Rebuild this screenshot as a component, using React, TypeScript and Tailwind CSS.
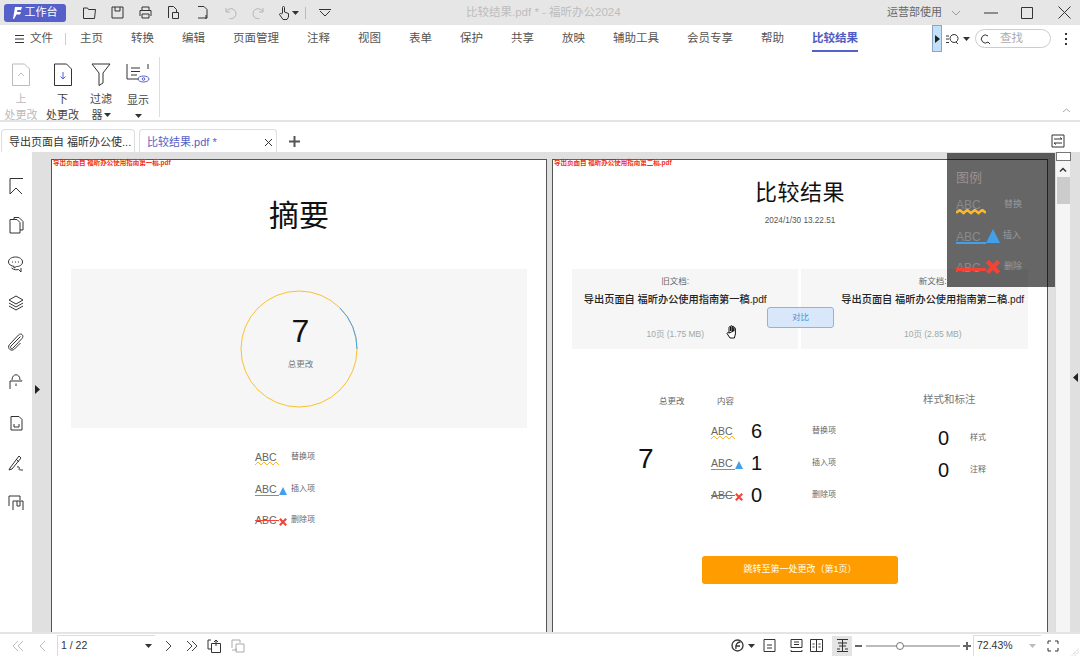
import React from 'react';

const Ic = ({ s = 18, w, h, c = '#333', sw = 1, children }: { s?: number; w?: number; h?: number; c?: string; sw?: number; children: React.ReactNode }) => (
  <svg width={w ?? s} height={h ?? s} viewBox={`0 0 ${w ?? s} ${h ?? s}`} fill="none" stroke={c} strokeWidth={sw} className="shrink-0">
    {children}
  </svg>
);

const Caret = ({ c = '#333' }: { c?: string }) => (
  <svg width="7" height="4" viewBox="0 0 7 4" className="shrink-0"><path d="M0 0h7L3.5 4z" fill={c} /></svg>
);

const menus = ['主页', '转换', '编辑', '页面管理', '注释', '视图', '表单', '保护', '共享', '放映', '辅助工具', '会员专享', '帮助'];

const TitleBar = () => (
  <div className="h-[25px] bg-[#e6e6e6] flex items-center relative">
    <div className="ml-[4px] w-[62px] h-[18px] rounded-[3px] bg-[#5560c8] flex items-center justify-center gap-[3px] text-white text-[11px]">
      <svg width="9" height="12" viewBox="0 0 9 12"><path d="M2 0h7L8 3H4.5L4 5h4L7 7.500H3.500L1 12H0z" fill="#fff" /></svg>
      工作台
    </div>
    <div className="ml-[9px] flex items-center">
      <div className="w-[28px] flex justify-center"><Ic s={15}><path d="M1.500 13.500V3h4l1 1.500h7l-1 9z" /></Ic></div>
      <div className="w-[28px] flex justify-center"><Ic s={15}><path d="M2 2h11v11H2zM5 2v4h5V2" /></Ic></div>
      <div className="w-[28px] flex justify-center"><Ic s={15}><path d="M4 5V2h7v3M2 11V5.500h11V11M4 9h7v4H4z" /></Ic></div>
      <div className="w-[29px] flex justify-center"><Ic s={15}><path d="M2.500 13V1.500h5l3 3V7M6.500 7.500h6v6h-6z" /></Ic></div>
      <div className="w-[28px] flex justify-center"><Ic s={15}><path d="M3 1.500h6l3 3V13H3M11 10v4" /></Ic></div>
      <div className="w-[28px] flex justify-center"><Ic s={15} c="#b5b5b5"><path d="M3 3v4h4M3.500 6.500a5 5 0 1 1 3 7" /></Ic></div>
      <div className="w-[29px] flex justify-center"><Ic s={15} c="#b5b5b5"><path d="M12 3v4H8M11.500 6.500a5 5 0 1 0-3 7" /></Ic></div>
      <div className="ml-[4px] w-[15px] flex justify-center"><Ic s={15}><path d="M5.500 8V2.500a1 1 0 0 1 2 0V7l4 1.500V12l-1.500 2.500H6L2.500 9.500c0-1 1-1.500 2-.5z" /></Ic></div>
      <Caret />
      <div className="ml-[6px] w-px h-[12px] bg-[#bbb]" />
      <div className="ml-[12px]"><Ic s={14}><path d="M1 3.500h12M2 5l5 5 5-5" /></Ic></div>
    </div>
    <div className="absolute left-[466px] top-[4px] text-[11.500px] text-[#bdbdbd] whitespace-nowrap">比较结果.pdf * - 福昕办公2024</div>
    <div className="ml-auto flex items-center">
      <span className="text-[11px] text-[#666]">运营部使用</span>
      <div className="ml-[9px]"><Ic s={10} c="#999"><path d="M1 3l4 4 4-4" /></Ic></div>
      <div className="ml-[23px]"><Ic s={14}><path d="M0 7h14" /></Ic></div>
      <div className="ml-[23px]"><Ic s={12}><path d="M.5.500h11v11H.5z" /></Ic></div>
      <div className="ml-[25px] mr-[9px]"><Ic s={13}><path d="M.5.500l12 12M12.500.500l-12 12" /></Ic></div>
    </div>
  </div>
);

const MenuBar = () => (
  <div className="h-[27px] flex items-center text-[11.500px] text-[#555] relative">
    <div className="ml-[15px]"><Ic s={10}><path d="M0 1.500h9M0 5h9M0 8.500h9" /></Ic></div>
    <span className="ml-[5px]">文件</span>
    <div className="ml-[12px] w-px h-[12px] bg-[#ccc]" />
    <div className="ml-[14px] flex gap-[28px]">
      {menus.map((m) => <span key={m} className="whitespace-nowrap">{m}</span>)}
    </div>
    <div className="ml-[28px] h-full relative flex items-center">
      <span className="text-[#4f5cc4] font-bold">比较结果</span>
      <div className="absolute left-0 right-0 bottom-0 h-[2px] bg-[#5560c8]" />
    </div>
    <div className="ml-[74px] w-[10px] h-[27px] bg-[#c4e0f8] border border-[#8aa6c4] flex items-center justify-center">
      <svg width="5" height="8" viewBox="0 0 5 8"><path d="M0 0l5 4-5 4z" fill="#222" /></svg>
    </div>
    <div className="ml-[3px]"><Ic s={14}><path d="M1 4h3M1 7h3M1 10.500h3M9 2.500a4 4 0 1 0 .1 0zM11 10l2 2" /></Ic></div>
    <div className="ml-[4px]"><Caret /></div>
    <div className="ml-[5px] w-[76px] h-[19px] rounded-full border border-[#ccc] flex items-center">
      <div className="ml-[3px]"><Ic s={12}><path d="M9 3a4 4 0 1 0 0 6M9 9l2 2" /></Ic></div>
      <span className="ml-[9px] text-[#aaa]">查找</span>
    </div>
    <div className="ml-[14px] flex flex-col gap-[3px]">
      <i className="block w-[2px] h-[2px] bg-[#333]" /><i className="block w-[2px] h-[2px] bg-[#333]" /><i className="block w-[2px] h-[2px] bg-[#333]" />
    </div>
  </div>
);

const Tool = ({ icon, label, w, dim, caret }: { icon: React.ReactNode; label: React.ReactNode; w: number; dim?: boolean; caret?: boolean }) => (
  <div className={`flex flex-col items-center text-[11px] leading-[16px] pt-[11px] ${dim ? 'text-[#bbb]' : 'text-[#444]'}`} style={{ width: w }}>
    <div className="h-[24px]">{icon}</div>
    <div className="mt-[5px] text-center whitespace-nowrap">{label}</div>
    {caret && <div className="mt-[6px]"><Caret /></div>}
  </div>
);

const Ribbon = () => (
  <div className="h-[70px] flex border-b-2 border-[#e4e4e4] relative">
    <Tool w={42} dim label={<>上<br />处更改</>} icon={<Ic w={18} h={23} c="#bbb"><path d="M.5 1h12l5 5v16.500H.5zM6 13l3-3 3 3" /></Ic>} />
    <Tool w={41} label={<>下<br />处更改</>} icon={<Ic w={18} h={23}><path d="M.5 1h12l5 5v16.500H.5z" /><path d="M9 9v7M6.500 13.500L9 16l2.500-2.500" stroke="#5560c8" /></Ic>} />
    <Tool w={36} label={<>过滤<br /><span className="inline-flex items-center gap-[1px]">器<Caret /></span></>} icon={<Ic w={20} h={23}><path d="M1 1h18l-7 9v10l-4 2.500V10z" /></Ic>} />
    <Tool w={38} caret label="显示" icon={<Ic w={24} h={23}><path d="M1 1v15h12M5 5h9M5 8.500h9M5 12h6M22 1v5" /><ellipse cx="17.500" cy="16" rx="5.500" ry="3" stroke="#5560c8" /><circle cx="17.500" cy="16" r="1.300" stroke="#5560c8" /></Ic>} />
    <div className="ml-[2px] mt-[5px] w-px h-[60px] bg-[#ddd]" />
    <div className="absolute right-[9px] bottom-[5px]"><Ic s={9} c="#aaa"><path d="M1 6l3.500-3L8 6" /></Ic></div>
  </div>
);

const TabBar = () => (
  <div className="h-[30px] flex items-end text-[11px] relative">
    <div className="ml-[1px] w-[134px] h-[23px] border border-b-0 border-[#ddd] rounded-t-[4px] flex items-center pl-[7px] pt-[2px] text-[#333] whitespace-nowrap">导出页面自 福昕办公使...</div>
    <div className="ml-[4px] w-[138px] h-[23px] border border-b-0 border-[#ddd] rounded-t-[4px] flex items-center pl-[7px] pt-[2px] text-[#5560c8]">
      比较结果.pdf *
      <div className="ml-auto mr-[3px]"><Ic s={9}><path d="M1 1l7 7M8 1L1 8" /></Ic></div>
    </div>
    <div className="ml-[12px] mb-[5px]"><Ic s={11} c="#555" sw={2}><path d="M5.500 0v11M0 5.500h11" /></Ic></div>
    <div className="ml-auto mr-[15px] mb-[4px]"><Ic s={14}><path d="M1 1h12v12H1zM3 5h8L9 3.500M11 9H3l2 1.500" /></Ic></div>
  </div>
);

const sideIcons = [
  <path key="a" d="M3 17V1.500h13M3 17l6-6 6 6" />,
  <path key="b" d="M7 3.500V1.500h5l4 4V14h-3M3 3.500h7l3 3V17H3z" />,
  <path key="c" d="M1.500 7c0-3 3-5 7-5s7 2 7 5-3 4.500-6 4.500L7 13v-1.700C4 11 1.500 9.500 1.500 7zM5 7h1M8 7h1M11 7h1M4.500 13c2.500 2 5 2 7 1.500l2.500 2.500v-4" />,
  <path key="d" d="M9 2l7 4-7 4-7-4zM2 9l7 4 7-4M2 12l7 4 7-4" />,
  <path key="e" d="M13.500 3.500L4 13c-1.500 2 .5 3.500 2 2l9-9.500c2.500-3-1-6-3.500-3.500l-9 9.500c-3 4 2 7.500 5 4.500l6-6" />,
  <path key="f" d="M3 17V9h12M5 8c0-7 8-7 8 0M15 8.500v.5M9 11.500v2.500" />,
  <path key="g" d="M4 2.500h8l3 3V16H4zM7 10v3h5v-3" />,
  <path key="h" d="M3 14L12 2l2 2L5 15l-3 1zM9 5l3 3M10 13c2-1 3 1 2 2s3 1 4 1" />,
  <path key="i" d="M2 12V2h11v4M6 16V7h10v9M10 7v5h3V7" />,
];

const Sidebar = () => (
  <div className="w-[32px] h-full bg-white flex flex-col items-center pt-[25px] gap-[21px] shrink-0">
    {sideIcons.map((p, i) => (
      <div key={i} className={i === 6 ? 'mt-[3px]' : i > 6 ? 'mt-[1px]' : ''}>
        <Ic s={18}>{p}</Ic>
      </div>
    ))}
  </div>
);

const Mark = ({ kind, w = 24, big }: { kind: 'wave' | 'ins' | 'del'; w?: number; big?: boolean }) => {
  const col = kind === 'wave' ? '#fbb82c' : kind === 'ins' ? '#42a0ea' : '#f44336';
  const iconS = big ? 14 : 8;
  return (
    <div className="flex items-end">
      <div className="relative leading-[12px]" style={{ width: w, fontSize: big ? 12 : 10.5 }}>
        <span className={big ? 'text-[#8a8a8a]' : 'text-[#666]'}>ABC</span>
        {kind === 'wave' && (
          <svg className="absolute left-0 bottom-[-4px]" width={w} height="6" viewBox="0 0 24 6" preserveAspectRatio="none">
            <path d="M0 4l3-3 3 3 3-3 3 3 3-3 3 3 3-3 3 3" stroke={col} strokeWidth={big ? 2.400 : 1} fill="none" />
          </svg>
        )}
        {kind === 'ins' && <div className="absolute left-0 right-0 bottom-[-1px]" style={{ height: big ? 2 : 1, background: col }} />}
        {kind === 'del' && <div className="absolute left-0 right-0 top-[6px]" style={{ height: big ? 3 : 1, background: col }} />}
      </div>
      {kind === 'ins' && <svg width={iconS} height={iconS} viewBox="0 0 10 10"><path d="M5 0l5 10H0z" fill={col} /></svg>}
      {kind === 'del' && <svg width={iconS} height={iconS} viewBox="0 0 10 10"><path d="M1 1l8 8M9 1L1 9" stroke={col} strokeWidth={big ? 3 : 2.600} /></svg>}
    </div>
  );
};

const PageHead = ({ t }: { t: string }) => (
  <div className="h-[6px] pl-px text-[6.500px] leading-[6px] font-bold text-[#f03010] whitespace-nowrap">{t}</div>
);

const LeftPage = () => (
  <div className="w-[496px] h-[480px] shrink-0 bg-white border border-[#555] border-b-0 flex flex-col">
    <PageHead t="导出页面自 福昕办公使用指南第一稿.pdf" />
    <div className="mt-[31px] h-[38px] text-center text-[30px] leading-[38px] text-[#111]">摘要</div>
    <div className="mt-[34px] mx-[19px] h-[159px] bg-[#f6f6f6] flex items-center justify-center relative">
      <svg width="118" height="118" viewBox="0 0 118 118">
        <circle cx="59" cy="59" r="58" fill="none" stroke="#fcc02e" strokeWidth="1" />
        <path d="M100 18A58 58 0 0 1 117 59" fill="none" stroke="#42a5f5" strokeWidth="1" />
      </svg>
      <div className="absolute inset-0 flex flex-col items-center pt-[44px] pl-[3px]">
        <div className="text-[32px] leading-[36px] text-[#111] font-['Liberation_Sans',sans-serif]">7</div>
        <div className="mt-[9px] text-[8.500px] leading-[12px] text-[#777]">总更改</div>
      </div>
    </div>
    <div className="mt-[23px] ml-[203px] flex flex-col gap-[19.500px] text-[8px] leading-[12px] text-[#666]">
      <div className="flex items-center gap-[12px] h-[12px]"><div className="w-[24px]"><Mark kind="wave" /></div>替换项</div>
      <div className="flex items-center gap-[4px] h-[12px]"><div className="w-[32px]"><Mark kind="ins" /></div>插入项</div>
      <div className="flex items-center gap-[4px] h-[12px]"><div className="w-[32px]"><Mark kind="del" /></div>删除项</div>
    </div>
  </div>
);

const DocCard = ({ label, name, size, pad }: { label: string; name: string; size: string; pad: string }) => (
  <div className={`w-[227px] h-[80px] bg-[#f6f6f6] flex flex-col items-center pt-[6px] ${pad}`}>
    <div className="text-[8.500px] leading-[12px] text-[#666]">{label}</div>
    <div className="mt-[6px] text-[10.200px] leading-[14px] text-[#222] whitespace-nowrap font-medium">{name}</div>
    <div className="mt-[21px] text-[8.500px] leading-[12px] text-[#9aa]">{size}</div>
  </div>
);

const StatRow = ({ kind, n, label }: { kind: 'wave' | 'ins' | 'del'; n: string; label: string }) => (
  <div className="h-[32px] flex items-center">
    <div className="w-[40px]"><Mark kind={kind} /></div>
    <div className="w-[61px] text-[20px] text-[#111] font-['Liberation_Sans',sans-serif]">{n}</div>
    <div className="text-[8px] text-[#666]">{label}</div>
  </div>
);

const RightPage = () => (
  <div className="w-[496px] h-[480px] shrink-0 bg-white border border-[#555] border-b-0 flex flex-col relative">
    <PageHead t="导出页面自 福昕办公使用指南第二稿.pdf" />
    <div className="mt-[12px] h-[30px] text-center text-[22px] leading-[30px] tracking-[0.500px] text-[#111]">比较结果</div>
    <div className="mt-[7px] text-center text-[8.200px] leading-[12px] text-[#555]">2024/1/30 13.22.51</div>
    <div className="mt-[42px] mx-[19px] flex gap-[3px]">
      <DocCard pad="pr-[20px]" label="旧文档:" name="导出页面自 福昕办公使用指南第一稿.pdf" size="10页 (1.75 MB)" />
      <DocCard pad="pl-[36px]" label="新文档:" name="导出页面自 福昕办公使用指南第二稿.pdf" size="10页 (2.85 MB)" />
    </div>
    <div className="absolute left-[214px] top-[147px] w-[67px] h-[21px] rounded-[3px] bg-[#d8e8fa] border border-[#7fb8ee] flex items-center justify-center text-[8.500px] text-[#4a90d9]">对比</div>
    <div className="absolute left-[171px] top-[164px]">
      <Ic s={16} c="#111"><path d="M5 9V3.500a.8.8 0 0 1 1.600 0V7M6.600 7V2.500a.8.8 0 0 1 1.600 0V7M8.200 7V3a.8.8 0 0 1 1.600 0v4M9.800 7V4.500a.8.8 0 0 1 1.600 0V10l-1 4H6L3 9.500c0-1 1-1 2-.5z" fill="#fff" /></Ic>
    </div>
    <div className="mt-[46px] flex">
      <div className="w-[158px] shrink-0">
        <div className="pl-[106px] text-[8.500px] leading-[12px] text-[#666]">总更改</div>
        <div className="mt-[35px] pl-[85px] text-[28px] leading-[34px] text-[#111] font-['Liberation_Sans',sans-serif]">7</div>
      </div>
      <div className="w-[212px] shrink-0">
        <div className="pl-[6px] text-[8.500px] leading-[12px] text-[#666]">内容</div>
        <div className="mt-[8px] flex flex-col pl-0">
          <StatRow kind="wave" n="6" label="替换项" />
          <StatRow kind="ins" n="1" label="插入项" />
          <StatRow kind="del" n="0" label="删除项" />
        </div>
      </div>
      <div className="-mt-[3px] w-[126px]">
        <div className="text-[10.500px] leading-[14px] text-[#777]">样式和标注</div>
        <div className="mt-[20px] pl-[15px] flex flex-col gap-[8px]">
          <div className="h-[24px] flex items-center"><span className="w-[32px] text-[20px] text-[#111] font-['Liberation_Sans',sans-serif]">0</span><span className="text-[8px] text-[#666]">样式</span></div>
          <div className="h-[24px] flex items-center"><span className="w-[32px] text-[20px] text-[#111] font-['Liberation_Sans',sans-serif]">0</span><span className="text-[8px] text-[#666]">注释</span></div>
        </div>
      </div>
    </div>
    <div className="mt-[45px] ml-[149px] w-[196px] h-[28px] rounded-[3px] bg-[#ff9c00] flex items-center justify-center text-[9px] text-white">跳转至第一处更改（第1页）</div>
  </div>
);

const Legend = () => (
  <div className="absolute left-[947px] top-[1px] w-[108px] h-[134px] bg-black/60 pl-[9px] pt-[17px]">
    <div className="text-[13px] leading-[16px] text-[#9a8f8f]">图例</div>
    <div className="mt-[11px] flex flex-col gap-[16px] text-[9px] text-[#999]">
      <div className="h-[15px] flex items-center"><div className="w-[48px]"><Mark kind="wave" w={30} big /></div>替换</div>
      <div className="h-[15px] flex items-center"><div className="w-[47px]"><Mark kind="ins" w={30} big /></div>插入</div>
      <div className="h-[15px] flex items-center"><div className="w-[48px]"><Mark kind="del" w={30} big /></div>删除</div>
    </div>
  </div>
);

const StatusBar = () => (
  <div className="h-[25px] border-t-2 border-[#e4e4e4] flex items-center relative">
    <div className="ml-[12px]"><Ic s={12} c="#bbb"><path d="M6 1L1 6l5 5M11 1L6 6l5 5" /></Ic></div>
    <div className="ml-[13px]"><Ic s={12} c="#bbb"><path d="M8 1L3 6l5 5" /></Ic></div>
    <div className="ml-[8px] w-[98px] h-[21px] border-l border-t border-[#ddd] flex items-center pl-[3px] text-[10.500px] text-[#333]">1 / 22<div className="ml-auto mr-[3px]"><Caret /></div></div>
    <div className="ml-[8px]"><Ic s={12} c="#444"><path d="M3 1l5 5-5 5" /></Ic></div>
    <div className="ml-[11px]"><Ic s={12} c="#444"><path d="M1 1l5 5-5 5M6 1l5 5-5 5" /></Ic></div>
    <div className="ml-[9px]"><Ic s={14}><path d="M4 1H1v9h3M4.500 4.500h9v9h-9zM9 7V1M7 3l2-2 2 2" /></Ic></div>
    <div className="ml-[10px]"><Ic s={14} c="#aaa"><path d="M1 9V1h8v3M5 5h8v8H5zM1 11h5l-1.500-1.500" /></Ic></div>
    <div className="ml-auto flex items-center">
      <Ic s={13} sw={1.300}><circle cx="6.500" cy="6.500" r="5.500" /><path d="M9.500 3C6 3 4 6 5 10M5 7h4" /></Ic>
      <div className="ml-[4px]"><Caret /></div>
      <div className="ml-[8px]"><Ic s={13}><path d="M1 .5h11v12H1zM4 6h5M4 9h5" /></Ic></div>
      <div className="ml-[14px]"><Ic s={13}><path d="M1 .5h11v8H1zM4 3h5M4 5.500h5M1 11v1.500h11V11" /></Ic></div>
      <div className="ml-[7px]"><Ic s={13}><path d="M.5.500h12v12H.5zM6.500.500v12M2.500 5h2M2.500 8h2M8.500 5h2M8.500 8h2" /></Ic></div>
      <div className="ml-[9px] w-[20px] h-[20px] bg-[#e4e4e4] flex items-center justify-center"><Ic s={13}><path d="M1 .5h11M6.500.500v12M2 4h9M3 7h7M1 10h3M9 10h3M1 12.500h11" /></Ic></div>
      <div className="ml-[3px] w-[7px] h-[2px] bg-[#666]" />
      <div className="ml-[4px] w-[94px] h-[2px] bg-[#bbb] relative">
        <div className="absolute left-[30px] -top-[3px] w-[8px] h-[8px] rounded-full bg-white border border-[#777]" />
      </div>
      <div className="ml-[3px]"><Ic s={8} c="#666" sw={2}><path d="M4 0v8M0 4h8" /></Ic></div>
      <div className="ml-[2px] w-[68px] h-[21px] border-l border-t border-[#ddd] flex items-center pl-[3px] text-[10.500px] text-[#333]">72.43%<div className="ml-auto mr-[5px]"><Caret c="#bbb" /></div></div>
      <div className="ml-[6px] mr-[21px]"><Ic s={12}><path d="M1 4V1h3M8 1h3v3M11 8v3H8M4 11H1V8" /></Ic></div>
    </div>
    <div className="absolute right-[1px] bottom-[1px]"><Ic s={8} c="#aaa"><path d="M7.500 1L1 7.500M7.500 4L4 7.500" strokeDasharray="1 1" /></Ic></div>
  </div>
);

export default function App() {
  return (
    <div className="w-[1080px] h-[657px] overflow-hidden bg-white font-['Liberation_Sans','Noto_Sans_CJK_SC',sans-serif]">
      <TitleBar />
      <MenuBar />
      <Ribbon />
      <TabBar />
      <div className="h-[480px] flex relative bg-[#e0e0e0]">
        <Sidebar />
        <div className="w-[19px] shrink-0 relative flex items-center">
          <svg className="ml-[3px] mt-[-6px]" width="5" height="9" viewBox="0 0 5 9"><path d="M0 0l5 4.500L0 9z" fill="#222" /></svg>
        </div>
        <div className="flex gap-[5px] pt-[7px] h-full overflow-hidden">
          <LeftPage />
          <RightPage />
        </div>
        <div className="ml-[7px] w-[15px] h-full bg-[#f5f5f5] border-l border-[#ddd] flex flex-col items-center shrink-0">
          <div className="w-[15px] h-[9px] bg-white border border-[#777]" />
          <div className="mt-[5px]"><Ic s={8}><path d="M1 5.500L4 2.500l3 3" strokeWidth="1.500" /></Ic></div>
          <div className="mt-[3px] w-[13px] h-[27px] bg-[#cccccc]" />
        </div>
        <div className="flex-1 flex items-center justify-center">
          <svg className="mt-[-30px]" width="5" height="9" viewBox="0 0 5 9"><path d="M5 0L0 4.500 5 9z" fill="#222" /></svg>
        </div>
        <Legend />
      </div>
      <StatusBar />
    </div>
  );
}
